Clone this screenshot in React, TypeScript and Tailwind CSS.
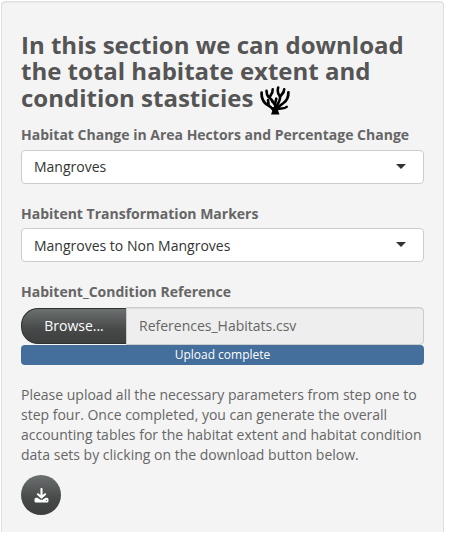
import React from "react";

function Coral() {
  return (
    <svg
      className="ml-[7px] mt-px h-[30px] w-[30px] shrink-0"
      viewBox="0 0 30 30"
      fill="none"
      stroke="#000"
      strokeWidth="2.6"
      strokeLinecap="round"
      strokeLinejoin="round"
    >
      <path d="M11.700 21h6.600l-.1 4 1.300 3.500h-8.500l1.300-3.500z" fill="#000" stroke="none" />
      <path d="M1.600 6.500C1.400 11 2.200 14 5 17C7.500 19.500 10.500 20 13 23.500" strokeWidth="2.700" />
      <path d="M8 14l.6 4.500" />
      <path d="M6.500 4.700C6.500 7.500 7 9.500 8.500 11C10.500 12.500 12 13 12.300 15.500" />
      <path d="M12.700 3.300C13 6.500 11.800 7.500 9.500 11" />
      <path d="M16.300 12.700L15.300 16.500V23" />
      <path d="M12 14.500l3 4.500" />
      <path d="M18.200 1.500C17 6 17.500 8 20 10.500C20.800 14.500 17.500 17 16.300 22" />
      <path d="M24.200 3.300C24.300 7 22 8 20 10.500" />
      <path d="M28.400 6.300C28.500 12 26.500 15 23.500 17C20.500 19 18.500 20.500 17.300 23" strokeWidth="2.700" />
      <path d="M26.800 20.800C24.500 22.800 21.500 22.200 17.800 23" strokeWidth="2.300" />
    </svg>
  );
}

function DownloadIcon() {
  return (
    <svg className="h-[15px] w-[15px]" viewBox="0 0 15 15" fill="none" stroke="currentColor">
      <path d="M7.500 1v8M4 6.300l3.500 3.300 3.500-3.300" strokeWidth="2.100" strokeLinecap="round" strokeLinejoin="round" />
      <path
        d="M2 9.800h1.500l2.200 1.500q1.800 1 3.600 0L11.500 9.800H13q1.500 0 1.500 1.500v1.700q0 1.500-1.500 1.500H2q-1.500 0-1.500-1.500v-1.700Q.5 9.800 2 9.800z"
        fill="currentColor"
        stroke="none"
      />
      <circle cx="12.300" cy="12.300" r=".6" fill="#474949" stroke="none" />
    </svg>
  );
}

function Select({ value, textClass = "" }: { value: string; textClass?: string }) {
  return (
    <div className="flex h-[34px] items-center justify-between rounded border border-[#ccc] bg-white pr-[17px] pl-3 text-[#333]">
      <span className={textClass}>{value}</span>
      <span className="mt-[-2px] h-0 w-0 border-x-[5px] border-t-[5px] border-x-transparent border-t-[#333]" />
    </div>
  );
}

export default function App() {
  return (
    <main className="h-[554px] w-[468px] overflow-hidden bg-white pt-px pl-px font-['Open_Sans','Noto_Sans',sans-serif] text-[14px] leading-5 text-[#666]">
      <section className="h-[531px] w-[443px] rounded-t border border-b-0 border-[#e0e2e2] bg-[#f4f4f4] px-[19px] pt-[30px] shadow-[inset_0_1px_1px_rgba(0,0,0,0.05)]">
        <h3 className="h-[93px] text-[24px] leading-[26.4px] font-bold text-[#555]">
          <span className="block whitespace-nowrap">In this section we can download</span>
          <span className="block whitespace-nowrap">the total habitate extent and</span>
          <span className="flex h-[26.4px] items-start whitespace-nowrap">
            condition stasticies
            <Coral />
          </span>
        </h3>
        <div className="h-[78px]">
          <div className="mb-[5px] font-bold">Habitat Change in Area Hectors and Percentage Change</div>
          <Select value="Mangroves" />
        </div>
        <div className="h-[78px] pt-px">
          <div className="mb-1 font-bold">Habitent Transformation Markers</div>
          <Select value="Mangroves to Non Mangroves" textClass="pt-px" />
        </div>
        <div className="mb-[5px] pt-px font-bold">Habitent_Condition Reference</div>
        <div className="flex h-[38px]">
          <button className="mt-px h-[36px] w-[105px] rounded-l-[17px] border border-r-0 border-[#2f3030] bg-linear-to-b from-[#6d7070] via-[#474949] via-60% to-[#3d3f3f] text-white">
            Browse...
          </button>
          <div className="flex flex-1 items-center rounded-r border border-[#ccc] bg-[#eee] pl-3 shadow-[inset_0_1px_1px_rgba(0,0,0,0.075)]">
            References_Habitats.csv
          </div>
        </div>
        <div className="h-5 rounded bg-[#446e9b] text-center text-[12px] leading-5 text-white">Upload complete</div>
        <p className="mt-5 whitespace-nowrap">
          Please upload all the necessary parameters from step one to<br />
          step four. Once completed, you can generate the overall<br />
          accounting tables for the habitat extent and habitat condition<br />
          data sets by clicking on the download button below.
        </p>
        <button
          aria-label="Download"
          className="mt-[10px] flex h-10 w-10 items-center justify-center rounded-full bg-linear-to-b from-[#6d7070] via-[#474949] via-60% to-[#3d3f3f] text-white"
        >
          <DownloadIcon />
        </button>
      </section>
    </main>
  );
}
